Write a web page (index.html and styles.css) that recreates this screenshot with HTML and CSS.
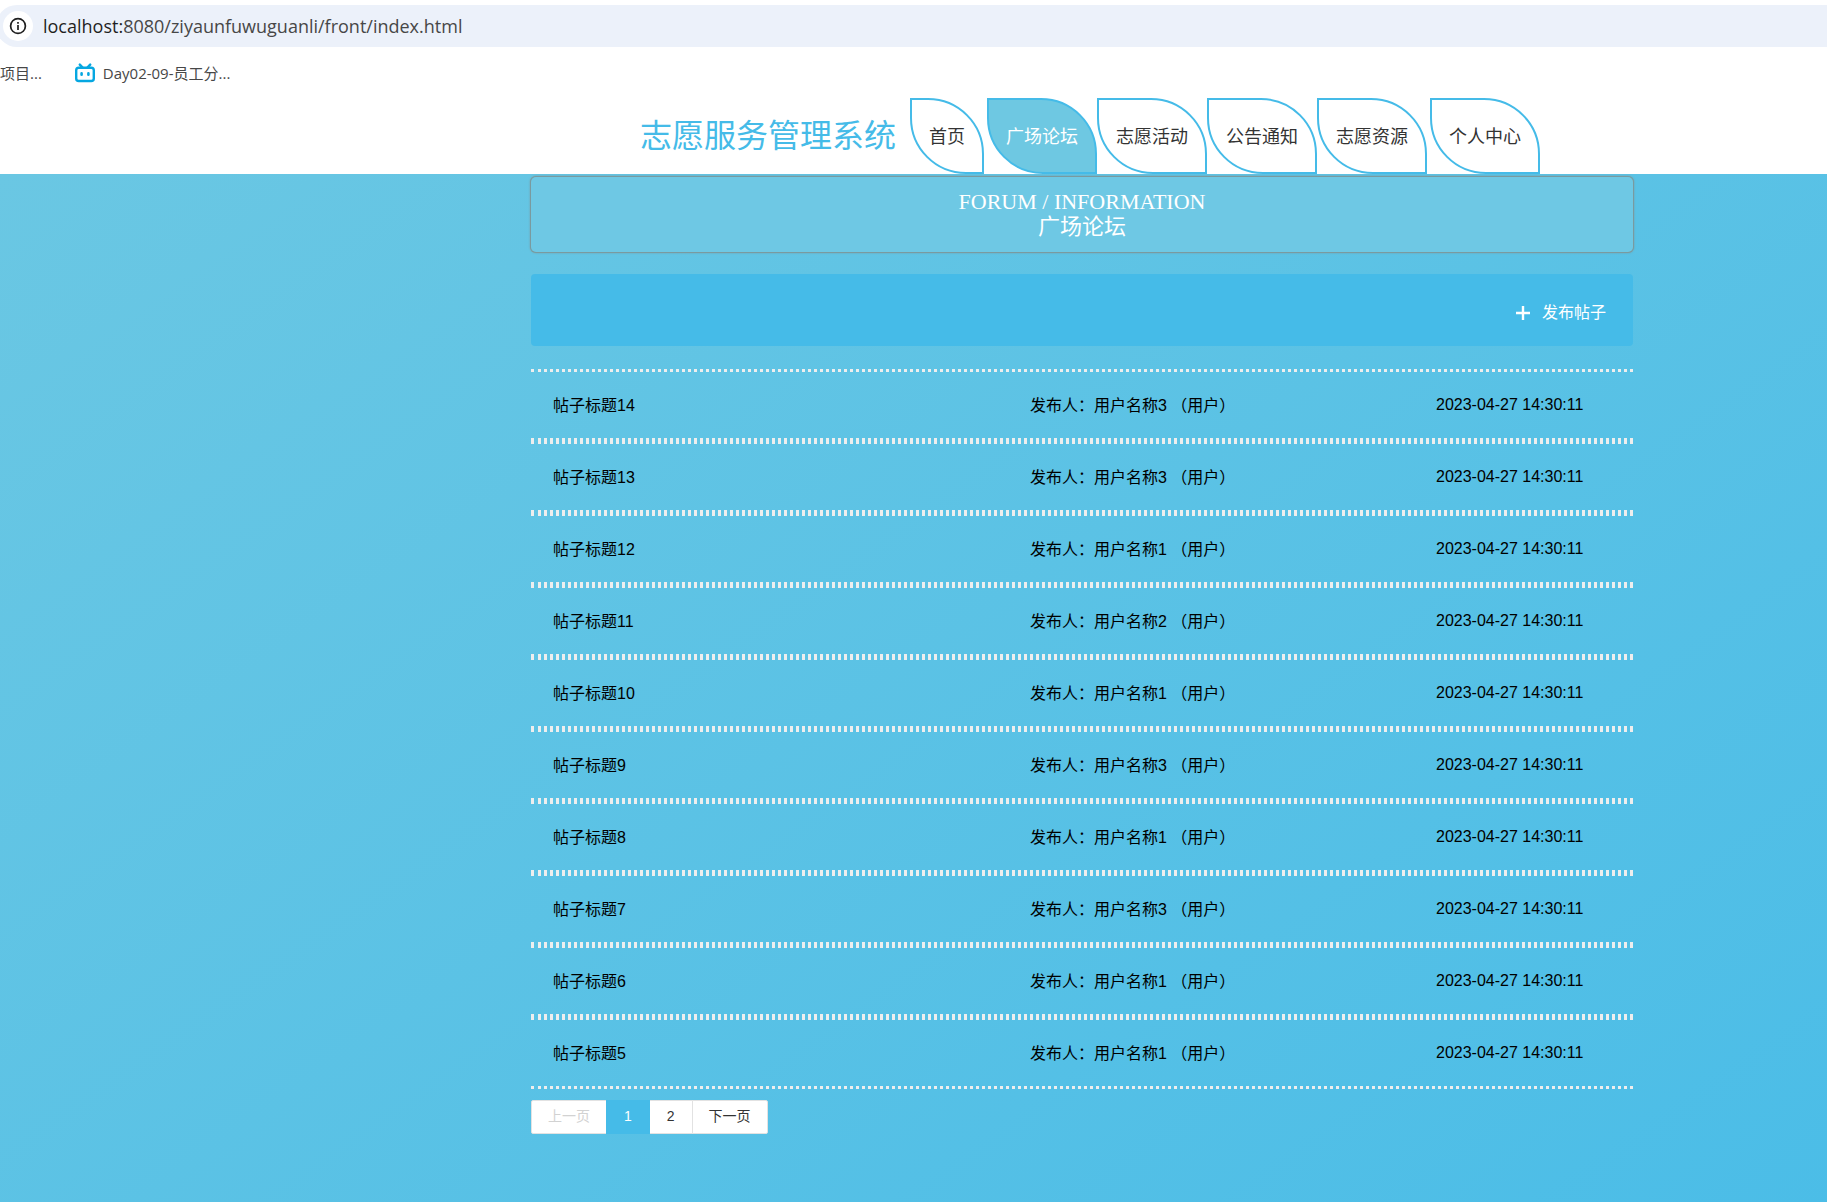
FILE: index.html
```html
<!DOCTYPE html>
<html lang="zh-CN">
<head>
<meta charset="utf-8">
<title>志愿服务管理系统</title>
<link rel="stylesheet" href="styles.css">
</head>
<body>
<div class="browser">
  <div class="address">
    <span class="info">
      <svg width="18" height="18" viewBox="0 0 18 18" fill="none" stroke="#1f1f1f"><circle cx="9" cy="9" r="7.4" stroke-width="1.7"/><path d="M9 8v5M9 5v1.8" stroke-width="1.7"/></svg>
    </span>
    <span class="url"><span class="host">localhost:</span>8080/ziyaunfuwuguanli/front/index.html</span>
  </div>
  <div class="bookmarks">
    <a href="#">项目...</a>
    <a href="#">
      <svg width="20" height="20" viewBox="0 0 20 20" fill="none" stroke="#06a7e1" stroke-linecap="round"><rect x="1.2" y="4.7" width="17.6" height="13.3" rx="2.6" stroke-width="2.4"/><path d="M4.8 1.6 7.4 4.4M15.2 1.6 12.6 4.4" stroke-width="2.4"/><path d="M6.6 10.4v1.4M13.4 10.4v1.4" stroke-width="2.6"/></svg>
      Day02-09-员工分...
    </a>
  </div>
</div>
<header class="header">
  <h1 class="brand">志愿服务管理系统</h1>
  <nav class="nav">
    <a class="home" href="#">首页</a>
    <a class="active" href="#">广场论坛</a>
    <a href="#">志愿活动</a>
    <a href="#">公告通知</a>
    <a href="#">志愿资源</a>
    <a class="user" href="#">个人中心</a>
  </nav>
</header>
<main class="main">
  <h2 class="heading"><span>FORUM / INFORMATION</span><span>广场论坛</span></h2>
  <div class="toolbar">
    <button class="publish" type="button">
      <svg width="14" height="14" viewBox="0 0 14 14" stroke="#fff" stroke-width="2.4"><path d="M7 0v14M0 7h14"/></svg>
      发布帖子
    </button>
  </div>
  <table class="posts">
    <tbody>
      <tr><td>帖子标题14</td><td>发布人：用户名称3 （用户）</td><td class="date">2023-04-27 14:30:11</td></tr>
      <tr><td>帖子标题13</td><td>发布人：用户名称3 （用户）</td><td class="date">2023-04-27 14:30:11</td></tr>
      <tr><td>帖子标题12</td><td>发布人：用户名称1 （用户）</td><td class="date">2023-04-27 14:30:11</td></tr>
      <tr><td>帖子标题11</td><td>发布人：用户名称2 （用户）</td><td class="date">2023-04-27 14:30:11</td></tr>
      <tr><td>帖子标题10</td><td>发布人：用户名称1 （用户）</td><td class="date">2023-04-27 14:30:11</td></tr>
      <tr><td>帖子标题9</td><td>发布人：用户名称3 （用户）</td><td class="date">2023-04-27 14:30:11</td></tr>
      <tr><td>帖子标题8</td><td>发布人：用户名称1 （用户）</td><td class="date">2023-04-27 14:30:11</td></tr>
      <tr><td>帖子标题7</td><td>发布人：用户名称3 （用户）</td><td class="date">2023-04-27 14:30:11</td></tr>
      <tr><td>帖子标题6</td><td>发布人：用户名称1 （用户）</td><td class="date">2023-04-27 14:30:11</td></tr>
      <tr><td>帖子标题5</td><td>发布人：用户名称1 （用户）</td><td class="date">2023-04-27 14:30:11</td></tr>
    </tbody>
  </table>
  <div class="pager">
    <button type="button" disabled>上一页</button>
    <button class="page current" type="button">1</button>
    <button class="page" type="button">2</button>
    <button type="button">下一页</button>
  </div>
</main>
</body>
</html>
```
FILE: styles.css
```css
* { box-sizing: border-box; }
html, body { margin: 0; min-height: 100vh; }
body {
  display: flex;
  flex-direction: column;
  overflow-x: hidden;
  background: #fff;
  font: 16px/24px "Liberation Sans", "Noto Sans CJK SC", sans-serif;
  color: #000;
}
a { color: inherit; text-decoration: none; }
svg { display: block; flex: none; }
button { font: inherit; cursor: pointer; }

/* Browser strip */
.browser {
  padding-top: 5px;
  font-family: "Open Sans", "Noto Sans CJK SC", sans-serif;
  color: #474747;
}
.address {
  display: flex;
  align-items: center;
  gap: 10px;
  height: 42px;
  margin-left: -4px;
  padding-left: 7px;
  border-radius: 21px 0 0 21px;
  background: #ecf1fa;
  font-size: 18px;
}
.info {
  display: grid;
  place-items: center;
  width: 30px;
  height: 30px;
  border-radius: 50%;
  background: #fff;
}
.host { color: #1f1f1f; }
.bookmarks {
  display: flex;
  gap: 33px;
  height: 51px;
  padding-top: 14px;
  font-size: 15px;
}
.bookmarks a { display: flex; align-items: center; gap: 8px; height: 24px; }

/* Site header */
.header {
  display: flex;
  align-items: center;
  gap: 14px;
  padding-left: 640px;
}
.brand {
  margin: 0;
  font-size: 32px;
  line-height: 48px;
  font-weight: 400;
  color: #45bbe8;
}
.nav { display: flex; font-size: 18px; color: #333; }
.nav a {
  height: 76px;
  padding: 0 17px;
  border: 2px solid #45bbe8;
  border-radius: 0 56px;
  line-height: 74px;
  white-space: nowrap;
}
.nav .home { margin-right: 3px; }
.nav .user { margin-left: 3px; }
.nav .active { background: #6ec8e2; color: #fff; }

/* Forum */
.main {
  flex: 1;
  padding: 3px 194px 68px 531px;
  background: linear-gradient(145deg, #6ac7e3, #45bbe8 120%);
}
.heading {
  display: flex;
  flex-direction: column;
  align-items: center;
  margin: 0 0 22px;
  padding: 12px 0 13px;
  border-radius: 5px;
  background: #6ec8e4;
  box-shadow: 0 0 0 1px #7a9a9f, 0 0 2px 1px #7a9a9f;
  font: 400 22px/25px "Liberation Serif", "Noto Sans CJK SC", serif;
  color: #fff;
}
.toolbar {
  display: flex;
  justify-content: flex-end;
  align-items: center;
  height: 72px;
  margin-bottom: 23px;
  padding: 6px 27px 0;
  border-radius: 4px;
  background: #45bbe8;
}
.publish {
  display: flex;
  align-items: center;
  gap: 12px;
  padding: 0;
  border: 0;
  background: none;
  color: #fff;
}
.posts, .posts tbody { display: block; }
.posts tr {
  display: grid;
  grid-template-columns: 477fr 406fr 175fr;
  align-items: center;
  height: 72px;
  padding: 0 22px;
  border: dotted #eee;
  border-width: 3px 0;
}
.posts td { padding: 2px 0 0; white-space: nowrap; }
.posts .date { padding: 0; }
.pager { display: flex; margin-top: 11px; }
.pager button {
  height: 34px;
  margin-right: -1px;
  padding: 0 16px 2px;
  border: 1px solid #e2e2e2;
  background: #fff;
  font-size: 14px;
  color: #333;
}
.pager .page { padding: 0 17px 2px; }
.pager button:first-child { border-radius: 2px 0 0 2px; }
.pager button:last-child { border-radius: 0 2px 2px 0; }
.pager button:disabled { color: #d2d2d2; }
.pager .current { position: relative; border-color: #45bbe8; background: #45bbe8; color: #fff; }
```
